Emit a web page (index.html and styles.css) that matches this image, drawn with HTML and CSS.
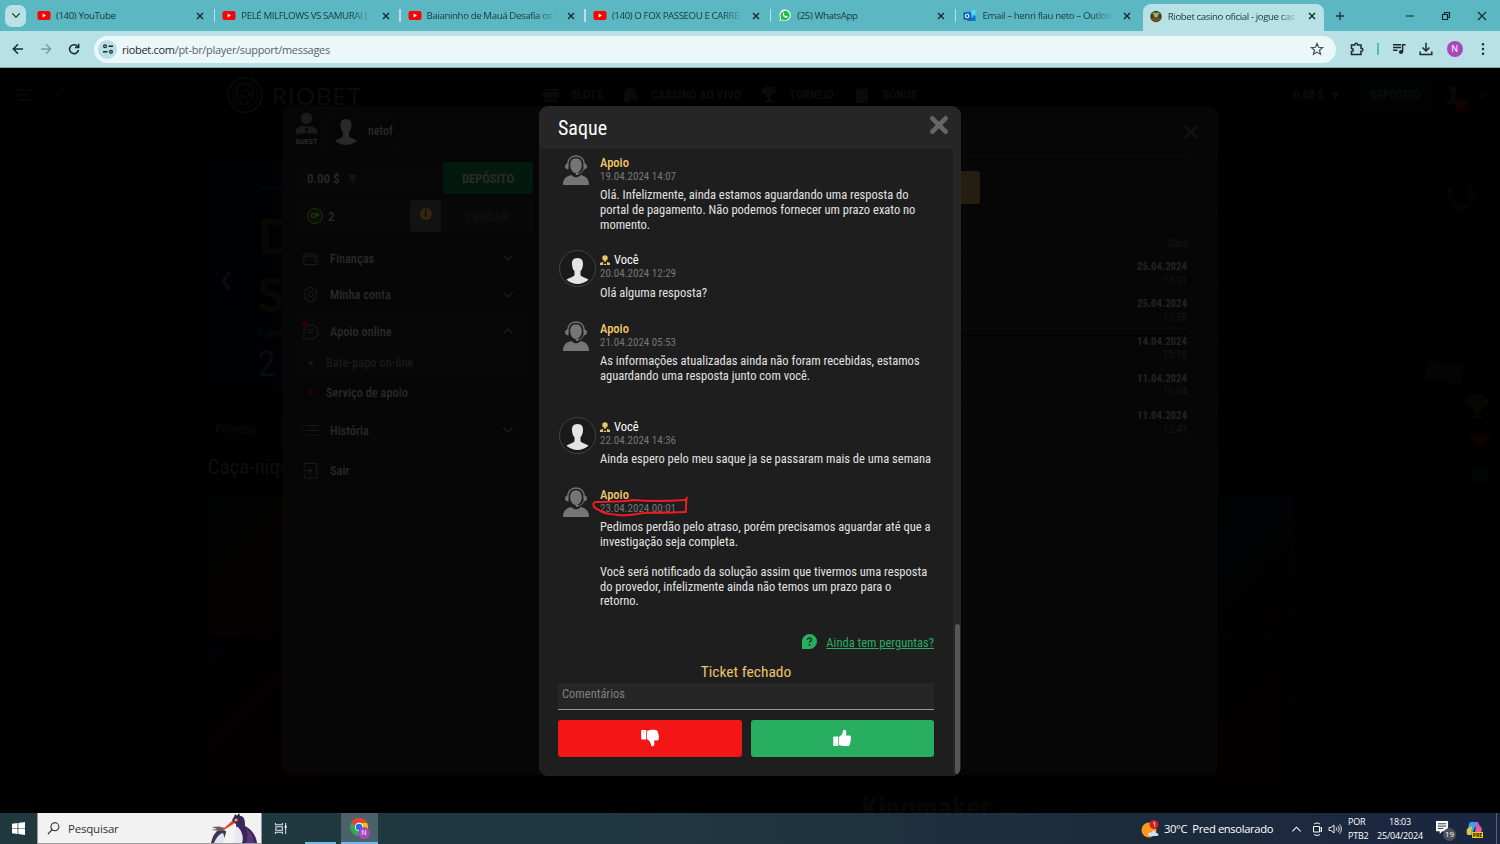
FILE: index.html
```
<!DOCTYPE html>
<html lang="pt-br">
<head>
<meta charset="UTF-8" />
<meta name="viewport" content="width=device-width, initial-scale=1" />
<title>Riobet casino oficial - jogue cassino online</title>
<link rel="stylesheet" href="styles.css">
</head>
<body>

<!-- shared icons -->
<svg class="sprite" xmlns="http://www.w3.org/2000/svg">
  <symbol id="i-x" viewBox="0 0 10 10"><path d="M2 2l6 6M8 2l-6 6" fill="none" stroke="currentColor" stroke-width="1.4"/></symbol>
  <symbol id="i-yt" viewBox="0 0 14 10"><rect x=".5" y=".5" width="13" height="9" rx="2.2" fill="#f00"/><path d="M5.600 3v4l3.400-2z" fill="#fff"/></symbol>
  <symbol id="i-down" viewBox="0 0 12 8"><path d="M1.500 1.500L6 6l4.500-4.500" fill="none" stroke="currentColor" stroke-width="1.5"/></symbol>
  <symbol id="i-close" viewBox="0 0 18 18"><path d="M3 3l12 12M15 3L3 15" fill="none" stroke="currentColor" stroke-width="4.200" stroke-linecap="round"/></symbol>
  <symbol id="i-man" viewBox="0 0 22 26"><path d="M11 0c4.200 0 5.800 2.800 5.500 6.500-.2 3-1 5-2.500 6.800v4c1.500 2.300 5.500 2.300 8 4.500-3 2.600-7 4.200-11 4.200s-8-1.600-11-4.200c2.500-2.200 6.500-2.200 8-4.500v-4c-1.500-1.800-2.300-3.800-2.500-6.800C5.200 2.800 6.800 0 11 0z" fill="currentColor"/></symbol>
  <symbol id="i-guest" viewBox="0 0 22 22"><circle cx="11" cy="6" r="6" fill="currentColor"/><path d="M0 22v-4.500L6 14l5 6 5-6 6 3.500V22h-9l-2-2-2 2zM7.500 14L11 15.300 14.500 14v3.500L11 16.300 7.500 17.500z" fill="currentColor"/></symbol>
  <symbol id="i-vip" viewBox="0 0 20 20"><circle cx="10" cy="6" r="5.500" fill="currentColor"/><path d="M8.500 10h3v4h-3zM0 20v-4l6-2.500V20zM20 20v-4l-6-2.500V20zM7.500 20v-2.500h5V20z" fill="currentColor"/></symbol>
  <symbol id="i-support" viewBox="0 0 26 30">
    <path d="M4.500 11C4.500 4.500 8 1 13 1s8.500 3.500 8.500 10" fill="none" stroke="currentColor" stroke-width="1.500"/>
    <path d="M13 3.200c3.800 0 5.800 2.800 5.800 6.800 0 3.600-2 8-5.800 8s-5.800-4.400-5.800-8c0-4 2-6.800 5.800-6.800z" fill="currentColor"/>
    <path d="M5.500 8.300v6.200C3.500 14.500 2 13.200 2 11.400s1.500-3.100 3.500-3.100zM20.500 8.300v6.200c2 0 3.500-1.300 3.500-3.100s-1.500-3.100-3.500-3.100z" fill="currentColor"/>
    <path d="M19 15.500c-1 2.200-2.500 3.200-5 3.200" fill="none" stroke="#1e1e1e" stroke-width="2"/>
    <path d="M20.500 14c-.8 3.300-3 4.700-6 4.700" fill="none" stroke="currentColor" stroke-width="1"/>
    <circle cx="14" cy="18.700" r="1.400" fill="currentColor"/>
    <path d="M0 29.500c0-5.200 3-8.500 8.500-9.500 1.300 1.700 2.800 2.300 4.500 2.300s3.200-.6 4.500-2.300c5.500 1 8.500 4.300 8.500 9.500-.3.500-1 .5-1.500.5h-23C1 30 .3 30 0 29.500z" fill="currentColor"/>
  </symbol>
  <symbol id="i-thumb" viewBox="0 0 18 18"><path d="M1 7.500h4.300v9.500H1a.8.800 0 0 1-.8-.8V8.300A.8.800 0 0 1 1 7.500z" fill="currentColor"/><circle cx="2.500" cy="15" r=".8" fill="#0003"/><path d="M6 8C8.500 6.500 9.500 4.800 10 2c.2-1.700 2.800-1.800 3.200.6.300 1.500.1 2.800-.4 4h3.400c1.700 0 2.200 1.600 1.400 2.600.7.800.5 2-.2 2.600.4.900.1 1.900-.6 2.400.2 1.600-.6 2.700-2.300 2.900-3.500.4-6-.3-8.500-1z" fill="currentColor"/></symbol>
</svg>

<!-- browser tabs -->
<header class="tabs">
  <span class="tab-list"><svg width="10" height="7"><use href="#i-down"/></svg></span>
  <div class="tab"><svg class="fav"><use href="#i-yt"/></svg><span class="title">(140) YouTube</span><svg class="x"><use href="#i-x"/></svg></div>
  <div class="tab"><svg class="fav"><use href="#i-yt"/></svg><span class="title fade">PELÉ MILFLOWS VS SAMURAI [</span><svg class="x"><use href="#i-x"/></svg></div>
  <div class="tab"><svg class="fav"><use href="#i-yt"/></svg><span class="title fade">Baianinho de Mauá Desafia os I</span><svg class="x"><use href="#i-x"/></svg></div>
  <div class="tab"><svg class="fav"><use href="#i-yt"/></svg><span class="title fade">(140) O FOX PASSEOU E CARRE</span><svg class="x"><use href="#i-x"/></svg></div>
  <div class="tab">
    <svg class="fav" viewBox="0 0 14 14"><path d="M1 13l.9-3.200A6.100 6.100 0 1 1 4.200 12z" fill="#fff"/><path d="M2.200 11.800l.6-2.200a5 5 0 1 1 1.700 1.700z" fill="#18c13b"/><path d="M5 4c.7-.6 1 .2 1.300 1-.8.800-.2 1.900 1.700 2.700.7-.9 1-.6 2 .1C9.800 10 8 10 6.300 8.800 4.500 7.500 4 5.500 5 4z" fill="#fff"/></svg>
    <span class="title">(25) WhatsApp</span><svg class="x"><use href="#i-x"/></svg></div>
  <div class="tab last">
    <svg class="fav" viewBox="0 0 14 14"><path d="M4 1h9v12H4z" fill="#35b8f1"/><path d="M9 1h4v5H9z" fill="#5fd5ff"/><path d="M4 7l9 6H4zM13 7v6L8 9.500z" fill="#1270c9"/><rect y="3.500" width="8" height="8" rx="1" fill="#0f5db3"/><circle cx="4" cy="7.500" r="1.900" fill="none" stroke="#fff" stroke-width="1.200"/></svg>
    <span class="title fade">Email – henri flau neto – Outloo</span><svg class="x"><use href="#i-x"/></svg></div>
  <div class="tab active">
    <svg class="fav" viewBox="0 0 14 14"><circle cx="7" cy="7" r="6.200" fill="#3b4a22"/><path d="M2 9c2-1 8-1 10 0-1 3-3 4-5 4s-4-1-5-4z" fill="#7c4a22"/><circle cx="7" cy="5.500" r="2.500" fill="#9fae7c"/><path d="M3 4l2-2 1 3zM11 4L9 2 8 5z" fill="#c79a3a"/></svg>
    <span class="title fade">Riobet casino oficial - jogue cas</span><svg class="x"><use href="#i-x"/></svg></div>
  <svg class="plus" viewBox="0 0 10 10"><path d="M5 1v8M1 5h8" stroke="#16393d" stroke-width="1.400"/></svg>
  <div class="win">
    <svg viewBox="0 0 10 10"><path d="M1 5h8" stroke="#10282b"/></svg>
    <svg viewBox="0 0 10 10"><path d="M1.500 3.500h5v5h-5zM3.500 3V1.500h5v5H7" fill="none" stroke="#10282b" stroke-width="1.200"/></svg>
    <svg viewBox="0 0 10 10"><path d="M1 1l8 8M9 1L1 9" stroke="#10282b" stroke-width="1.100"/></svg>
  </div>
</header>

<!-- address bar -->
<div class="toolbar">
  <div class="nav-icons">
    <svg viewBox="0 0 12 12"><path d="M11 6H1.500M6 1.300L1.300 6 6 10.700" fill="none" stroke="#1c2b2d" stroke-width="1.500"/></svg>
    <svg viewBox="0 0 12 12"><path d="M1 6h9.500M6 1.300L10.700 6 6 10.700" fill="none" stroke="#7b9a9d" stroke-width="1.400"/></svg>
    <svg viewBox="0 0 12 12"><path d="M10 4A4.500 4.500 0 1 0 10.500 7M10.700.8v3.700H7" fill="none" stroke="#1c2b2d" stroke-width="1.500"/></svg>
  </div>
  <div class="address">
    <span class="site-info"><svg width="12" height="10" viewBox="0 0 12 10"><path d="M6.500 2.200h4.500M1 7.800h4.500" stroke="#1c2b2d" stroke-width="1.400"/><circle cx="3" cy="2.300" r="1.400" fill="none" stroke="#1c2b2d" stroke-width="1.200"/><circle cx="9" cy="7.700" r="1.400" fill="none" stroke="#1c2b2d" stroke-width="1.200"/></svg></span>
    <span class="url"><b>riobet.com</b>/pt-br/player/support/messages</span>
    <svg class="star" viewBox="0 0 14 14"><path d="M7 1.500l1.600 3.800 4 .3-3.100 2.600 1 4L7 10.100l-3.500 2.100 1-4-3.100-2.600 4-.3z" fill="none" stroke="#3d4f51" stroke-width="1.200"/></svg>
  </div>
  <div class="tools">
    <svg viewBox="0 0 14 14"><path d="M1.500 3h3.300c-.3-2.200 3.200-2.200 2.900 0H11v3.200c2.400-.3 2.400 3.300 0 3V12.500H1.500V9.400c2.300.2 2.300-3.200 0-3z" fill="none" stroke="#1c2b2d" stroke-width="1.500"/></svg>
    <i class="bar"></i>
    <svg viewBox="0 0 14 14"><path d="M1 2.700h8M1 5.500h8M1 8.300h4.500" stroke="#1c2b2d" stroke-width="1.400"/><path d="M10.600 10V2.800h3" fill="none" stroke="#1c2b2d" stroke-width="1.500"/><circle cx="9" cy="10" r="2.100" fill="#1c2b2d"/></svg>
    <svg viewBox="0 0 14 14"><path d="M7 .8v8M3.500 5.500L7 9l3.500-3.500M1.200 9.500v3h11.600v-3" fill="none" stroke="#1c2b2d" stroke-width="1.500"/></svg>
    <span class="profile">N</span>
    <svg viewBox="0 0 14 14"><circle cx="7" cy="2.300" r="1.200" fill="#1c2b2d"/><circle cx="7" cy="7" r="1.200" fill="#1c2b2d"/><circle cx="7" cy="11.700" r="1.200" fill="#1c2b2d"/></svg>
  </div>
</div>

<main class="site">
  <!-- dimmed site behind the modals -->
  <div class="site-header">
    <svg class="burger" viewBox="0 0 52 14"><path d="M0 2h16M0 7h11M0 12h13" stroke="#080808" stroke-width="1.500"/><circle cx="45" cy="6" r="4" fill="none" stroke="#060606" stroke-width="1.300"/><path d="M48 9l3 4" stroke="#060606"/></svg>
    <svg class="coin" viewBox="0 0 36 36"><circle cx="18" cy="18" r="17" fill="none" stroke="#0a0906" stroke-width="2.500" stroke-dasharray="5 1"/><circle cx="18" cy="18" r="13" fill="none" stroke="#0a0906"/><path d="M18 7c6 0 10 6 6 9 5 3 1 9-3 8-1 5-6 5-7 0-5 1-8-5-3-8-4-4 1-9 7-9z" fill="none" stroke="#0a0906" stroke-width="1.500"/><circle cx="18" cy="17" r="4" fill="none" stroke="#0a0906" stroke-width="1.500"/></svg>
    <span class="brand">RIOBET</span>
    <nav>
      <a><svg viewBox="0 0 16 16"><path d="M1 2h14v2H1zM0 5h16v6H0zM2 12h12v3H2z" fill="#0a0a0a"/></svg>SLOTS</a>
      <a><svg viewBox="0 0 16 16"><path d="M1 8c-1-10 13-10 12 0l3 2-3 5-5-3-2 3H0z" fill="#0a0a0a"/></svg>CASSINO AO VIVO</a>
      <a><svg viewBox="0 0 16 16"><path d="M3 0h10v2h3c0 4-2 5-4 5-1 2-2 3-3 3v3h3v2H4v-2h3v-3C6 10 5 9 4 7 2 7 0 6 0 2h3z" fill="#0a0a0a"/></svg>TORNEIO</a>
      <a><svg viewBox="0 0 16 16"><path d="M3 0l3 2h4l3-2v4h1v12H2V4h1z" fill="#0a0a0a"/></svg>BÔNUS</a>
    </nav>
    <div class="account"><span>0.00 $ &nbsp;▼</span><span class="dep">DEPÓSITO</span><span class="who"><svg viewBox="0 0 22 26"><use href="#i-man"/></svg><i>1</i></span><svg class="chev"><use href="#i-down"/></svg></div>
  </div>
  <div class="site-body">
    <div class="hero">
      <div class="hero-text"><small>PRAGMATIC</small><strong>D</strong><strong>S</strong><span>Prêmio</span><em>2</em></div>
      <svg class="prev" viewBox="0 0 12 22"><path d="M10 2L3 11l7 9" fill="none" stroke="#0a0c0e" stroke-width="3"/></svg>
    </div>
    <div class="side-cards"><div></div><div>Retirada</div><div></div><div></div></div>
    <div class="filter">Provedor</div>
    <h2 class="slots-title">Caça-níqueis</h2>
    <div class="games">
      <div class="g1"></div><div class="g2"></div><div class="g3"></div><div class="g4"></div><div class="g5"></div>
      <div class="g6"></div><div class="g7"></div><div class="g8"></div><div class="g9"></div><div class="g10"></div>
      <div class="g8"></div><div class="g3"></div><div class="g7"></div><div class="g4"><b>Kingmaker</b></div><div class="g8"></div>
    </div>
  </div>
  <svg class="decor" viewBox="0 0 200 400">
    <path d="M150 30c-4 20 18 28 23 10l-5-12" fill="none" stroke="#050402" stroke-width="5"/>
    <path d="M128 202l36 6-4 20-36-8z" fill="#040404"/>
    <path d="M170 236h14v4h6c0 6-3 9-7 9-1 4-3 5-4 5v4h4v2h-12v-2h4v-4c-1 0-3-1-4-5-4 0-7-3-7-9h6z" fill="#080602"/>
    <path d="M180 290c-18-12-8-20 0-13 8-7 18 1 0 13z" fill="#0b0101"/>
    <circle cx="180" cy="316" r="9" fill="#010605"/>
  </svg>

  <!-- player cabinet -->
  <section class="cabinet">
    <div class="side">
      <div class="user-row">
        <div class="guest"><svg><use href="#i-guest"/></svg>GUEST</div>
        <div class="user-box"><svg><use href="#i-man"/></svg>netof</div>
      </div>
      <div class="money"><span>0.00 $ <i>▼</i></span><b class="deposit">DEPÓSITO</b></div>
      <div class="money cp"><em>CP</em><span>2</span><b class="info"><i>i</i></b><b class="swap">TROCAR</b></div>
      <ul class="menu">
        <li><svg class="ico" viewBox="0 0 18 18"><path d="M2 4h12v2M2 4v10c0 1 .5 1.500 1.500 1.500h12.500V6.500H3C2 6.500 1.500 5 2 4zM16 9.500h-3v3h3" fill="none" stroke="currentColor" stroke-width="1.200"/></svg>Finanças<svg class="arr"><use href="#i-down"/></svg></li>
        <li><svg class="ico" viewBox="0 0 18 18"><path d="M7 1.500h4l.6 2.200 2.200-.5 2 3.400L14.300 9l1.500 2.300-2 3.500-2.200-.6-.6 2.300H7l-.6-2.300-2.200.6-2-3.500L3.700 9 2.200 6.600l2-3.400 2.200.5z" fill="none" stroke="currentColor" stroke-width="1.200"/><circle cx="9" cy="9" r="2.500" fill="none" stroke="currentColor" stroke-width="1.200"/></svg>Minha conta<svg class="arr"><use href="#i-down"/></svg></li>
        <li class="open"><svg class="ico" viewBox="0 0 18 18"><path d="M2 17v-8a7.500 7.500 0 1 1 7.500 8zM6 7.500h7M5.500 10.500h5" fill="none" stroke="currentColor" stroke-width="1.200"/><circle cx="3" cy="0.500" r="3" fill="#300"/></svg>Apoio online<svg class="arr up"><use href="#i-down"/></svg></li>
        <li class="sub dim">Bate-papo on-line</li>
        <li class="sub red">Serviço de apoio</li>
        <li class="history"><svg class="ico" viewBox="0 0 18 18"><path d="M1 4h1.500M1 9h1.500M1 14h1.500M4.500 4H18M4.500 9H18M4.500 14H18" stroke="currentColor" stroke-width="1.200"/></svg>História<svg class="arr"><use href="#i-down"/></svg></li>
        <li class="exit"><svg class="ico" viewBox="0 0 18 18"><path d="M3 6V1.500h12.500v15.500H3V12.500M1 9.200h9M7 5.700l3.500 3.500L7 12.700" fill="none" stroke="currentColor" stroke-width="1.200"/></svg>Sair</li>
      </ul>
    </div>
    <div class="tickets">
      <div class="tickets-head"><svg><use href="#i-close"/></svg></div>
      <div class="new-ticket"></div>
      <div class="th">Data</div>
      <div class="tr"><b>25.04.2024</b>18:01</div>
      <div class="tr"><b>25.04.2024</b>17:58</div>
      <div class="tr"><b>14.04.2024</b>18:18</div>
      <div class="tr"><b>11.04.2024</b>16:04</div>
      <div class="tr last"><b>11.04.2024</b>12:43</div>
    </div>
  </section>

  <!-- ticket dialog -->
  <section class="dialog">
    <div class="dialog-head"><h1>Saque</h1><svg><use href="#i-close"/></svg></div>
    <div class="dialog-body">
      <div class="thread">
        <div class="msg">
          <div class="pic"><svg class="agent"><use href="#i-support"/></svg></div>
          <div class="txt"><h3>Apoio</h3><time>19.04.2024 14:07</time>
            <p>Olá. Infelizmente, ainda estamos aguardando uma resposta do<br>portal de pagamento. Não podemos fornecer um prazo exato no<br>momento.</p></div>
        </div>
        <div class="msg">
          <div class="pic"><span class="me"><svg><use href="#i-man"/></svg></span></div>
          <div class="txt"><h3 class="you"><svg><use href="#i-vip"/></svg>Você</h3><time>20.04.2024 12:29</time>
            <p>Olá alguma resposta?</p></div>
        </div>
        <div class="msg">
          <div class="pic"><svg class="agent"><use href="#i-support"/></svg></div>
          <div class="txt"><h3>Apoio</h3><time>21.04.2024 05:53</time>
            <p>As informações atualizadas ainda não foram recebidas, estamos<br>aguardando uma resposta junto com você.<br>&nbsp;</p></div>
        </div>
        <div class="msg">
          <div class="pic"><span class="me"><svg><use href="#i-man"/></svg></span></div>
          <div class="txt"><h3 class="you"><svg><use href="#i-vip"/></svg>Você</h3><time>22.04.2024 14:36</time>
            <p>Ainda espero pelo meu saque ja se passaram mais de uma semana</p></div>
        </div>
        <div class="msg">
          <div class="pic"><svg class="agent"><use href="#i-support"/></svg></div>
          <div class="txt"><h3>Apoio</h3><time>23.04.2024 00:01</time>
            <p>Pedimos perdão pelo atraso, porém precisamos aguardar até que a<br>investigação seja completa.</p>
            <p class="next">Você será notificado da solução assim que tivermos uma resposta<br>do provedor, infelizmente ainda não temos um prazo para o<br>retorno.</p></div>
          <svg class="mark" viewBox="0 0 100 24"><path d="M4 4C18 3.500 32 4 42 2c16 1.500 32 1.500 52 0l1.500-1.500-.8 13.500C84 14.500 74 15 68 14.500c-8 0-12 0-19 1-10 1.500-16 2.500-22 1.500C18 15.500 12 16 8 12 2 10 1 6 4 4z" fill="none" stroke="#ed1c24" stroke-width="2"/></svg>
        </div>
      </div>
      <div class="more"><svg viewBox="0 0 15 15"><path d="M0 15V7.500A7.500 7.500 0 1 1 7.500 15z" fill="#27ae60"/><path d="M5.500 6c0-2.800 4.200-2.500 4 0 0 1.200-2 1.300-2 2.800" fill="none" stroke="#16331f" stroke-width="1.400"/><circle cx="7.500" cy="11" r=".9" fill="#16331f"/></svg><a>Ainda tem perguntas?</a></div>
      <div class="closed">Ticket fechado</div>
      <div class="comment">Comentários</div>
      <div class="votes">
        <span class="no"><svg viewBox="0 0 18 18"><use href="#i-thumb"/></svg></span>
        <span class="yes"><svg viewBox="0 0 18 18"><use href="#i-thumb"/></svg></span>
      </div>
    </div>
    <div class="scroll"><i></i></div>
  </section>
</main>

<!-- windows taskbar -->
<footer class="taskbar">
  <span class="start"><svg viewBox="0 0 14 14"><path d="M0 2l6-.9V6.600H0zM6.800 1L14 0v6.600H6.800zM0 7.400h6v5.500L0 12zM6.800 7.400H14V14l-7.200-1z" fill="#fff"/></svg></span>
  <div class="search">
    <svg class="lens" viewBox="0 0 14 14"><circle cx="8.500" cy="5.200" r="4.300" fill="none" stroke="#222" stroke-width="1.100"/><path d="M5.500 8.300L1 13" stroke="#222" stroke-width="1.200"/></svg>
    Pesquisar
    <svg class="penguins" viewBox="0 0 50 30">
      <path d="M0 30c2-8 4-11 9-14l6 2c0 5-3 9-6 12z" fill="#42315a"/><path d="M3 30c2-5 5-9 9-10 2 4 1 8-1 10z" fill="#dfe5ee"/>
      <path d="M0 17l6-1-5-2 7-.5 6 1.500-3 3z" fill="#6b5b55"/>
      <path d="M12 16l9-8 3 2-11 7z" fill="#e2452c"/>
      <path d="M21 8c1-5 5-6.500 9-5 4 1 4 6 4 10 6 3 11 9 12 17H24c1-5 2-11 1-19z" fill="#3b2757"/>
      <path d="M25 14c-1 5-1 12-1 16h7c2-5 0-12-4-16z" fill="#e4e8f3"/><path d="M35 15c5 4 8 9 8 15h-8c2-5 2-10 0-15z" fill="#5a3577"/>
      <circle cx="25" cy="7" r="1.600" fill="#e3b545"/><path d="M23 5l1-4 2 2 2-3 1 3" fill="#2c1e44"/>
    </svg>
  </div>
  <span class="view"><svg viewBox="0 0 14 14"><path d="M1 1v2h7.500V1M1 13v-2h7.500v2M1.500 5h7v4h-7zM12 1v12" fill="none" stroke="#dfe5e8" stroke-width="1.100"/><path d="M11 4h2v2.500h-2z" fill="#fff"/></svg></span>
  <span class="slot"></span>
  <span class="slot on">
    <svg viewBox="0 0 20 20"><circle cx="9" cy="9" r="9" fill="#34a853"/><path d="M9 4.800h7.900A9 9 0 0 1 9 18z" fill="#fbbc05"/><path d="M1.200 4.500A9 9 0 0 1 16.900 4.800H9L5 8z" fill="#ea4335"/><circle cx="9" cy="9" r="4.200" fill="#fff"/><circle cx="9" cy="9" r="3.300" fill="#1a73e8"/></svg>
    <i>N</i>
  </span>
  <div class="tray">
    <svg class="sun" viewBox="0 0 18 18"><circle cx="8" cy="10" r="7.500" fill="#f79a1c"/><path d="M7 15c0-2.500 2.500-3 3.500-2.500C11.500 10 15 10.500 15.200 13c3 0 2.800 3 .8 3H9c-1.500 0-2-.5-2-1z" fill="#cfe0f7"/><circle cx="13" cy="4.500" r="4.500" fill="#c9211e"/><text x="11.500" y="7.200" font-size="7" fill="#fff">1</text></svg>
    <span class="weather">30°C&nbsp; Pred ensolarado</span>
    <svg class="upc" viewBox="0 0 12 8"><path d="M1.500 6.500L6 2l4.500 4.500" fill="none" stroke="#fff" stroke-width="1.100"/></svg>
    <svg class="cam" viewBox="0 0 12 14"><path d="M2.500 4.500h6v5.500h-6zM8.500 6.500l2-1v4l-2-1M3 2c2-1.200 4-1.200 6 0M3 12.500c2 1.200 4 1.200 6 0" fill="none" stroke="#fff"/></svg>
    <svg class="vol" viewBox="0 0 14 12"><path d="M1 4.500h2L6 2v8L3 7.500H1zM8 4.300c1 1 1 2.400 0 3.400M9.800 2.800c1.800 1.800 1.800 4.600 0 6.400M11.500 1.300c2.400 2.600 2.400 6.800 0 9.400" fill="none" stroke="#fff" stroke-width=".9"/></svg>
    <div class="two lang">POR<br>PTB2</div>
    <div class="two clock">18:03<br>25/04/2024</div>
    <span class="notif"><svg viewBox="0 0 14 14"><path d="M0 0h13v11H7l-3 3v-3H0z" fill="#fff"/><path d="M2 3h9M2 5.500h9M2 8h6" stroke="#1d2e40"/></svg><i>19</i></span>
    <span class="copilot"><svg viewBox="0 0 16 16"><path d="M5 1h5c2 0 2 2 3 4l-4 1-3 8H3c-3 0-2-4-1-7s1-6 3-6z" fill="#29a9e8"/><path d="M8 1h3c2 0 2 4 4 5 2 2 0 8-3 8H8l2-7z" fill="#b45fe0"/><path d="M1 8l5-3-1 9H3c-2 0-3-2-2-6z" fill="#e8c43b"/><path d="M10 6h4c2 2 1 5 0 7h-5z" fill="#f2607c"/></svg><i>PRE</i></span>
    <i class="peek"></i>
  </div>
</footer>
</body>
</html>
```
FILE: styles.css
```
* { box-sizing: border-box; }
body {
  margin: 0;
  width: 1500px;
  height: 844px;
  overflow: hidden;
  display: flex;
  flex-direction: column;
  background: #000;
  font-family: "Open Sans", "Noto Sans", sans-serif;
  font-size: 11px;
}
h1, h2, h3, p, ul { margin: 0; padding: 0; }
i, em { font-style: normal; }
svg { display: block; flex: none; overflow: visible; }
.sprite { position: absolute; width: 0; height: 0; }

/* Tabs */
.tabs {
  height: 31px;
  flex: none;
  display: flex;
  align-items: center;
  background: #5bb8c2;
  color: #17393d;
  padding-left: 5px;
}
.tab-list {
  width: 21px;
  height: 22px;
  border-radius: 7px;
  background: #b8e1e5;
  display: flex;
  align-items: center;
  justify-content: center;
  margin-right: 4px;
}
.tab {
  width: 185.300px;
  height: 31px;
  padding: 0 10px 0 7px;
  display: flex;
  align-items: center;
  position: relative;
  flex: none;
}
.tab::after {
  content: "";
  width: 1.5px;
  height: 13px;
  background: #b8e1e5;
  position: absolute;
  right: 0;
  top: 9px;
}
.tab.last::after, .tab.active::after { display: none; }
.tab .fav { width: 14px; height: 13px; margin-right: 5px; }
.tab .title {
  width: 134px;
  font-size: 9.700px;
  letter-spacing: -.4px;
  white-space: nowrap;
  overflow: hidden;
}
.fade { -webkit-mask-image: linear-gradient(90deg, #000 82%, transparent 98%); mask-image: linear-gradient(90deg, #000 82%, transparent 98%); }
.tab .x { width: 10px; height: 10px; margin-left: auto; color: #10282b; }
.tab.active {
  width: 181px;
  height: 27px;
  align-self: flex-end;
  background: #b8e1e5;
  border-radius: 8px 8px 0 0;
  padding: 0 7px 3px 6px;
  margin-left: 1px;
}
.plus { width: 10px; height: 10px; margin-left: 11px; }
.win { margin-left: auto; display: flex; gap: 26px; padding-right: 13px; }
.win svg { width: 10px; height: 10px; }

/* Toolbar */
.toolbar {
  height: 37px;
  flex: none;
  display: flex;
  align-items: center;
  background: #b8e1e5;
  border-bottom: 1px solid #7fa9ad;
}
.nav-icons { display: flex; gap: 16px; padding-left: 12px; width: 94px; }
.nav-icons svg { width: 12px; height: 12px; }
.address {
  width: 1242px;
  height: 27px;
  border-radius: 14px;
  background: #ebf7f8;
  display: flex;
  align-items: center;
  padding: 0 12px 0 4px;
}
.site-info {
  width: 19px;
  height: 19px;
  border-radius: 50%;
  background: #b8e1e5;
  display: flex;
  align-items: center;
  justify-content: center;
}
.url { margin-left: 5px; font-size: 11px; letter-spacing: -.3px; color: #566668; }
.url b { font-weight: 400; color: #1c2b2d; }
.star { width: 14px; height: 14px; margin-left: auto; }
.tools { display: flex; align-items: center; flex: 1; justify-content: space-between; padding: 0 10px 0 14px; }
.tools svg { width: 14px; height: 14px; }
.tools .bar { width: 1.5px; height: 12px; background: #5bb8c2; }
.profile {
  width: 16px;
  height: 16px;
  border-radius: 50%;
  background: #ab47bc;
  color: #fff;
  font-size: 9px;
  line-height: 16px;
  text-align: center;
}

/* Dimmed site */
.site {
  flex: 1;
  position: relative;
  overflow: hidden;
  font-family: "Roboto Condensed", Roboto, sans-serif;
  font-stretch: 75%;
}
.site-header { height: 54px; display: flex; align-items: center; color: #0c0c0c; font-weight: 700; }
.burger { width: 52px; height: 14px; margin-left: 17px; }
.coin { width: 36px; height: 36px; margin-left: 158px; }
.brand { font: 400 24px Lato, sans-serif; letter-spacing: 1px; margin-left: 9px; width: 96px; }
.site-header nav { display: flex; gap: 20px; margin-left: 175px; font-size: 12.200px; }
.site-header nav a { display: flex; align-items: center; gap: 12px; white-space: nowrap; }
.site-header nav svg { width: 16px; height: 16px; }
.account { margin-left: auto; display: flex; align-items: center; padding-right: 13px; font-size: 12px; }
.account .dep { margin: 0 15px 0 19px; padding: 8px 10px; background: #010302; border-radius: 3px; }
.who { display: flex; position: relative; margin-right: 16px; color: #080808; }
.who svg { width: 16px; height: 22px; }
.who i { position: absolute; right: -7px; bottom: -5px; background: #100101; width: 12px; text-align: center; font-size: 9px; }
.chev { width: 10px; height: 7px; }
.site-body {
  width: 1085px;
  margin: 36px auto 0;
  display: grid;
  grid-template-columns: 840px 1fr;
  column-gap: 14px;
}
.hero { height: 234px; background: #000103; border-radius: 8px; display: flex; position: relative; }
.hero-text { padding: 25px 0 0 50px; display: flex; flex-direction: column; color: #0b0b0b; font-size: 12px; }
.hero-text small { font-size: 8px; height: 24px; }
.hero-text strong { font: 900 48px/58px Lato, sans-serif; color: #080702; }
.hero-text span { margin-top: 4px; }
.hero-text em { font-size: 36px; line-height: 46px; }
.prev { position: absolute; left: 12px; top: 112px; width: 12px; height: 22px; }
.side-cards { display: grid; gap: 5px; color: #080808; font-size: 12px; }
.side-cards div { background: #010101; border-radius: 6px; padding: 15px; }
.filter { height: 32px; margin-top: 22px; padding: 8px; background: #010101; color: #0c0c0c; font-size: 12px; grid-column: 1 / 3; }
.slots-title { grid-column: 1 / 3; font-size: 21px; font-weight: 400; color: #0f0f0f; margin: 9px 0 14px; line-height: 25px; }
.games { grid-column: 1 / 3; display: grid; grid-template-columns: repeat(5, 1fr); grid-auto-rows: 143px; gap: 5px; }
.games div { border-radius: 4px; background: #020100; }
.games b { font-size: 30px; color: #070707; }
.games .g1 { background: linear-gradient(135deg, #010203, #040200 40%, #030100); }
.games .g5 { background: linear-gradient(135deg, #010100, #010203 60%, #030100); }
.games .g6 { background: linear-gradient(135deg, #010203, #040000 50%, #020100); }
.games .g10 { background: linear-gradient(135deg, #010102, #030100); }
.games .g8 { background: #010102; }
.games .g3 { background: #010002; }
.games .g7 { background: #010100; }
.decor { position: absolute; width: 200px; height: 400px; right: 0; top: 90px; }

/* Cabinet */
.cabinet {
  position: absolute;
  left: 282px;
  top: 38px;
  width: 936px;
  height: 669px;
  background: #060606;
  border-radius: 9px;
  display: flex;
  justify-content: space-between;
  padding: 6px 30px 0 9px;
  color: #2a2a2a;
  font-size: 12.400px;
  font-weight: 500;
}
.side { width: 242px; }
.user-row { display: flex; gap: 3px; height: 50px; }
.guest { width: 31px; display: flex; flex-direction: column; align-items: center; font-size: 8px; font-weight: 700; gap: 3px; }
.guest svg { width: 21px; height: 22px; color: #1c1c1c; }
.user-box { width: 72px; height: 37px; border: 1px solid #080808; display: flex; align-items: center; gap: 11px; padding-left: 9px; font-size: 12px; }
.user-box svg { width: 22px; height: 26px; margin-top: 3px; }
.money { height: 32px; display: flex; align-items: center; background: #070707; border-radius: 3px; padding-left: 16px; font-size: 13px; }
.money > b { height: 32px; line-height: 33px; text-align: center; }
.money span > i { font-size: 14px; color: #151515; margin-left: 3px; }
.deposit { width: 90px; margin-left: auto; background: #03190d; border-radius: 3px; font-size: 12.500px; }
.cp { margin-top: 6px; }
.cp em { width: 16px; height: 16px; border-radius: 50%; border: 1px solid #2a2a0c; background: #031203; color: #3a3a18; font-size: 8px; line-height: 14px; text-align: center; margin-right: 5px; }
.money > .info { width: 31px; background: #121212; margin-left: auto; display: flex; justify-content: center; padding-top: 8px; border-radius: 3px 0 0 3px; }
.info i { width: 12px; height: 12px; border-radius: 50%; background: #34280c; color: #0b0b0b; font-size: 10px; line-height: 12px; }
.swap { width: 92px; color: #0f0f0f; background: #080808; font-size: 12.500px; }
.menu { list-style: none; padding-top: 8px; }
.menu li { height: 36.500px; display: flex; align-items: center; padding: 0 20px 0 11px; }
.menu .ico { width: 17px; height: 17px; margin-right: 11px; color: #191919; }
.menu .arr { width: 12px; height: 8px; margin-left: auto; margin-right: -1px; color: #1b1b1b; }
.menu .up { transform: scaleY(-1); }
.menu .open { background: #070707; }
.menu .sub { height: 30.500px; padding-left: 18px; background: #070707; }
.menu .sub::before { content: ""; width: 4px; height: 4px; border-radius: 50%; background: currentColor; margin-right: 13px; }
.menu .sub.dim { height: 26px; color: #1a1a1a; }
.menu .sub.red { height: 34px; background: none; border-bottom: 1px solid #080808; }
.menu .sub.red::before { background: #300; }
.menu .history { height: 41px; }
.menu .exit { height: 40px; }
.tickets { width: 560px; display: flex; flex-direction: column; align-items: stretch; text-align: right; font-weight: 400; color: #151515; font-size: 11px; }
.tickets-head { height: 45px; display: flex; justify-content: flex-end; padding: 13px 0 0; border-bottom: 1px solid #090909; color: #111; }
.tickets-head svg { width: 14px; height: 14px; margin-right: -10px; }
.new-ticket { width: 352px; height: 33px; margin-top: 14px; background: #241d10; border-radius: 3px; }
.th { height: 50px; padding-top: 33px; border-bottom: 1px solid #0b0b0b; line-height: 13px; margin-top: 0; }
.tr { height: 37.300px; padding: 6px 1px 0 0; line-height: 13.500px; border-bottom: 1px solid #0b0b0b; }
.tr.last { border: 0; }
.tr b { display: block; color: #242424; font-size: 10.800px; }

/* Dialog */
.dialog {
  position: absolute;
  left: 539px;
  top: 38px;
  width: 422px;
  height: 670px;
  border-radius: 9px;
  background: #262626;
  overflow: hidden;
  display: grid;
  grid-template-columns: 414px 8px;
  grid-template-rows: 43px 1fr;
}
.dialog-head { grid-column: 1 / 3; display: flex; justify-content: space-between; padding: 9px 12px 0 19px; color: #666; }
.dialog-head h1 { font-size: 20px; font-weight: 400; line-height: 26px; color: #fff; }
.dialog-head svg { width: 20px; height: 20px; }
.dialog-body { background: #1e1e1e; padding: 6.500px 19px 0 19px; color: #e2e2e2; }
.thread { height: 478px; }
.msg { display: flex; position: relative; margin-bottom: 21px; }
.pic { width: 42px; flex: none; }
.agent { width: 26px; height: 30px; color: #757575; margin: -1px 0 0 5px; }
.me { width: 37px; height: 37px; margin: -3px 0 0 1px; border: 1.500px solid #444; border-radius: 50%; background: #1a1a1a; display: flex; align-items: center; justify-content: center; color: #e4e4e4; }
.me svg { width: 23px; height: 26px; margin-top: 4px; }
.txt { white-space: nowrap; }
.txt h3 { font-size: 12.500px; line-height: 14px; font-weight: 500; color: #f3c969; }
.txt h3.you { color: #fff; font-weight: 400; display: flex; align-items: center; gap: 4px; }
.you svg { width: 10px; height: 10px; color: #e9c36c; }
.txt time { display: block; font-size: 11px; line-height: 13.500px; color: #777; margin-bottom: 5px; }
.txt p { font-size: 12.500px; line-height: 14.800px; }
.txt .next { margin-top: 14.800px; }
.mark { position: absolute; left: 33px; top: 10px; width: 100px; height: 24px; }
.more { height: 20px; display: flex; align-items: center; justify-content: flex-end; gap: 9px; font-size: 12.500px; color: #27ae60; margin-top: -1px; }
.more a { text-decoration: underline; }
.more svg { width: 15px; height: 15px; margin-top: -2px; }
.closed { margin-top: 9.500px; height: 21px; line-height: 21px; font-size: 15.500px; text-align: center; color: #e9c36c; }
.comment { height: 27px; background: #262626; border-bottom: 1px solid #999; padding: 4px; line-height: 14px; font-size: 12.500px; color: #808080; }
.votes { margin-top: 10px; display: grid; grid-template-columns: 1fr 1fr; gap: 9px; }
.votes span { height: 37px; border-radius: 3px; display: flex; align-items: center; justify-content: center; color: #fff; }
.votes svg { width: 18px; height: 18px; margin-top: -1px; }
.no { background: #f21616; }
.no svg { transform: scaleY(-1); }
.yes { background: #27ae60; }
.scroll { background: #262626; display: flex; align-items: flex-end; padding: 0 1.500px 2px; }
.scroll i { width: 5px; height: 150px; border-radius: 3px; background: #555; }

/* Taskbar */
.taskbar {
  height: 31px;
  flex: none;
  display: flex;
  align-items: stretch;
  background: linear-gradient(90deg, #20393f, #203842 40%, #1c2b3c 75%, #1b2640);
  color: #fff;
}
.taskbar span { display: flex; align-items: center; position: relative; }
.start { width: 37px; justify-content: center; }
.start svg { width: 13px; height: 13px; }
.search { width: 225px; background: #f2f2f2; color: #333; display: flex; align-items: center; padding-left: 9px; font-size: 11.500px; letter-spacing: -.2px; border: 1px solid #999; border-top: 0; }
.lens { width: 13px; height: 13px; margin-right: 8px; }
.penguins { width: 50px; height: 30px; margin-left: auto; }
.view { width: 38px; justify-content: center; }
.view svg { width: 14px; height: 13px; }
.slot { width: 31px; margin-left: 5px; border-bottom: 2px solid #76b9ed; }
.slot.on { width: 37px; background: #4b626a; justify-content: center; }
.slot svg { width: 20px; height: 20px; }
.slot i { position: absolute; right: 8px; bottom: 3px; width: 12px; height: 12px; border-radius: 50%; background: #ab47bc; font-size: 7px; line-height: 12px; text-align: center; }
.tray { margin-left: auto; display: flex; align-items: center; }
.sun { width: 18px; height: 18px; margin-right: 5px; }
.weather { font-size: 11.200px; letter-spacing: -.35px; width: 127px; white-space: nowrap; }
.upc { width: 11px; height: 8px; }
.cam { width: 12px; height: 14px; margin-left: 9px; }
.vol { width: 14px; height: 12px; margin-left: 5px; }
.two { font-size: 9px; line-height: 13.500px; text-align: center; letter-spacing: -.2px; }
.lang { width: 33px; text-align: left; padding-left: 6px; }
.clock { width: 50px; }
.notif { width: 19px; height: 20px; margin-left: 11px; }
.notif svg { width: 13px; height: 13px; margin-top: -2px; }
.taskbar .notif i { position: absolute; right: -1px; bottom: -2px; width: 13px; height: 13px; border-radius: 50%; background: #4a4f58; font-size: 8px; line-height: 12px; text-align: center; }
.copilot { width: 17px; margin-left: 11px; }
.copilot svg { width: 16px; height: 16px; }
.copilot i { position: absolute; right: 0; bottom: -1px; background: #f4c518; color: #111; font-size: 5px; line-height: 6px; font-weight: 700; padding: 0 1px; }
.peek { width: 4px; height: 31px; margin-left: 13px; border-left: 1px solid #56627a; }
```
